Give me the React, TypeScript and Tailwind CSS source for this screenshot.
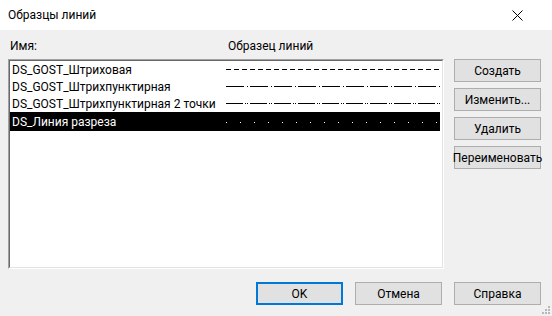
import React from "react";

const font = { fontFamily: '"Segoe UI", Roboto, "Noto Sans", sans-serif' };

function Sample({ kind }: { kind: number }) {
  if (kind === 0)
    return (
      <svg width="214" height="17" shapeRendering="crispEdges">
        <line x1="0" y1="8.5" x2="214" y2="8.5" stroke="#000" strokeWidth="1" strokeDasharray="5 3" />
      </svg>
    );
  if (kind === 1)
    return (
      <svg width="214" height="17" shapeRendering="crispEdges">
        <line x1="0" y1="8.5" x2="214" y2="8.5" stroke="#000" strokeWidth="1" strokeDasharray="18 3 1 2" />
      </svg>
    );
  if (kind === 2)
    return (
      <svg width="214" height="17" shapeRendering="crispEdges">
        <line x1="0" y1="8.5" x2="214" y2="8.5" stroke="#000" strokeWidth="1" strokeDasharray="17 2 1 1 1 2" />
      </svg>
    );
  return (
    <svg width="214" height="19" shapeRendering="crispEdges">
      <line x1="0" y1="10.5" x2="214" y2="10.5" stroke="#fff" strokeWidth="1" strokeDasharray="1 13" />
    </svg>
  );
}

const rows = [
  "DS_GOST_Штриховая",
  "DS_GOST_Штрихпунктирная",
  "DS_GOST_Штрихпунктирная 2 точки",
  "DS_Линия разреза",
];

function Btn({ label, primary }: { label: string; primary?: boolean }) {
  return (
    <div
      className={
        "flex items-center justify-center bg-[#e1e1e1] text-[12px] text-black " +
        (primary ? "border-2 border-[#0078d7]" : "border border-[#adadad]")
      }
      style={{ width: 87, height: 23 }}
    >
      {label}
    </div>
  );
}

export default function App() {
  return (
    <div className="w-[552px] h-[316px] bg-[#f0f0f0] flex flex-col relative overflow-hidden" style={font}>
      <div className="h-[30px] bg-white flex items-center justify-between pl-[8px] pr-[29px]">
        <span className="text-[12px] text-black">Образцы линий</span>
        <svg width="11" height="11" viewBox="0 0 11 11">
          <path d="M0.5 0.5 L10.5 10.5 M10.5 0.5 L0.5 10.5" stroke="#000" strokeWidth="1" />
        </svg>
      </div>
      <div className="flex h-[16px] mt-[8px] text-[12px] leading-[16px] text-black">
        <span className="pl-[10px] w-[228px]">Имя:</span>
        <span>Образец линий</span>
      </div>
      <div className="flex mt-[5px] pl-[8px]">
        <div className="w-[436px] h-[210px] border border-t-[#a0a0a0] border-l-[#a0a0a0] border-b-white border-r-white">
          <div className="w-full h-full bg-white border border-t-[#696969] border-l-[#696969] border-b-[#e3e3e3] border-r-[#e3e3e3] pr-[2px]">
            {rows.map((r, i) => (
              <div
                key={r}
                className={
                  "flex items-center text-[12px] " +
                  (i === 3 ? "h-[19px] bg-black text-white" : "h-[17px] text-black")
                }
              >
                <span className="w-[216px] pl-[2px] whitespace-nowrap">{r}</span>
                <Sample kind={i} />
              </div>
            ))}
          </div>
        </div>
        <div className="ml-[10px] flex flex-col gap-[6px]">
          <Btn label="Создать" />
          <Btn label="Изменить..." />
          <Btn label="Удалить" />
          <Btn label="Переименовать" />
        </div>
      </div>
      <div className="flex justify-end gap-[12px] pr-[11px] mt-[13px]">
        <Btn label="OK" primary />
        <Btn label="Отмена" />
        <Btn label="Справка" />
      </div>
      <svg className="absolute right-[1px] bottom-[1px]" width="9" height="9" viewBox="0 0 9 9">
        <g fill="#b8b8b8">
          <rect x="6" y="0" width="2" height="2" />
          <rect x="3" y="3" width="2" height="2" />
          <rect x="6" y="3" width="2" height="2" />
          <rect x="0" y="6" width="2" height="2" />
          <rect x="3" y="6" width="2" height="2" />
          <rect x="6" y="6" width="2" height="2" />
        </g>
      </svg>
    </div>
  );
}
